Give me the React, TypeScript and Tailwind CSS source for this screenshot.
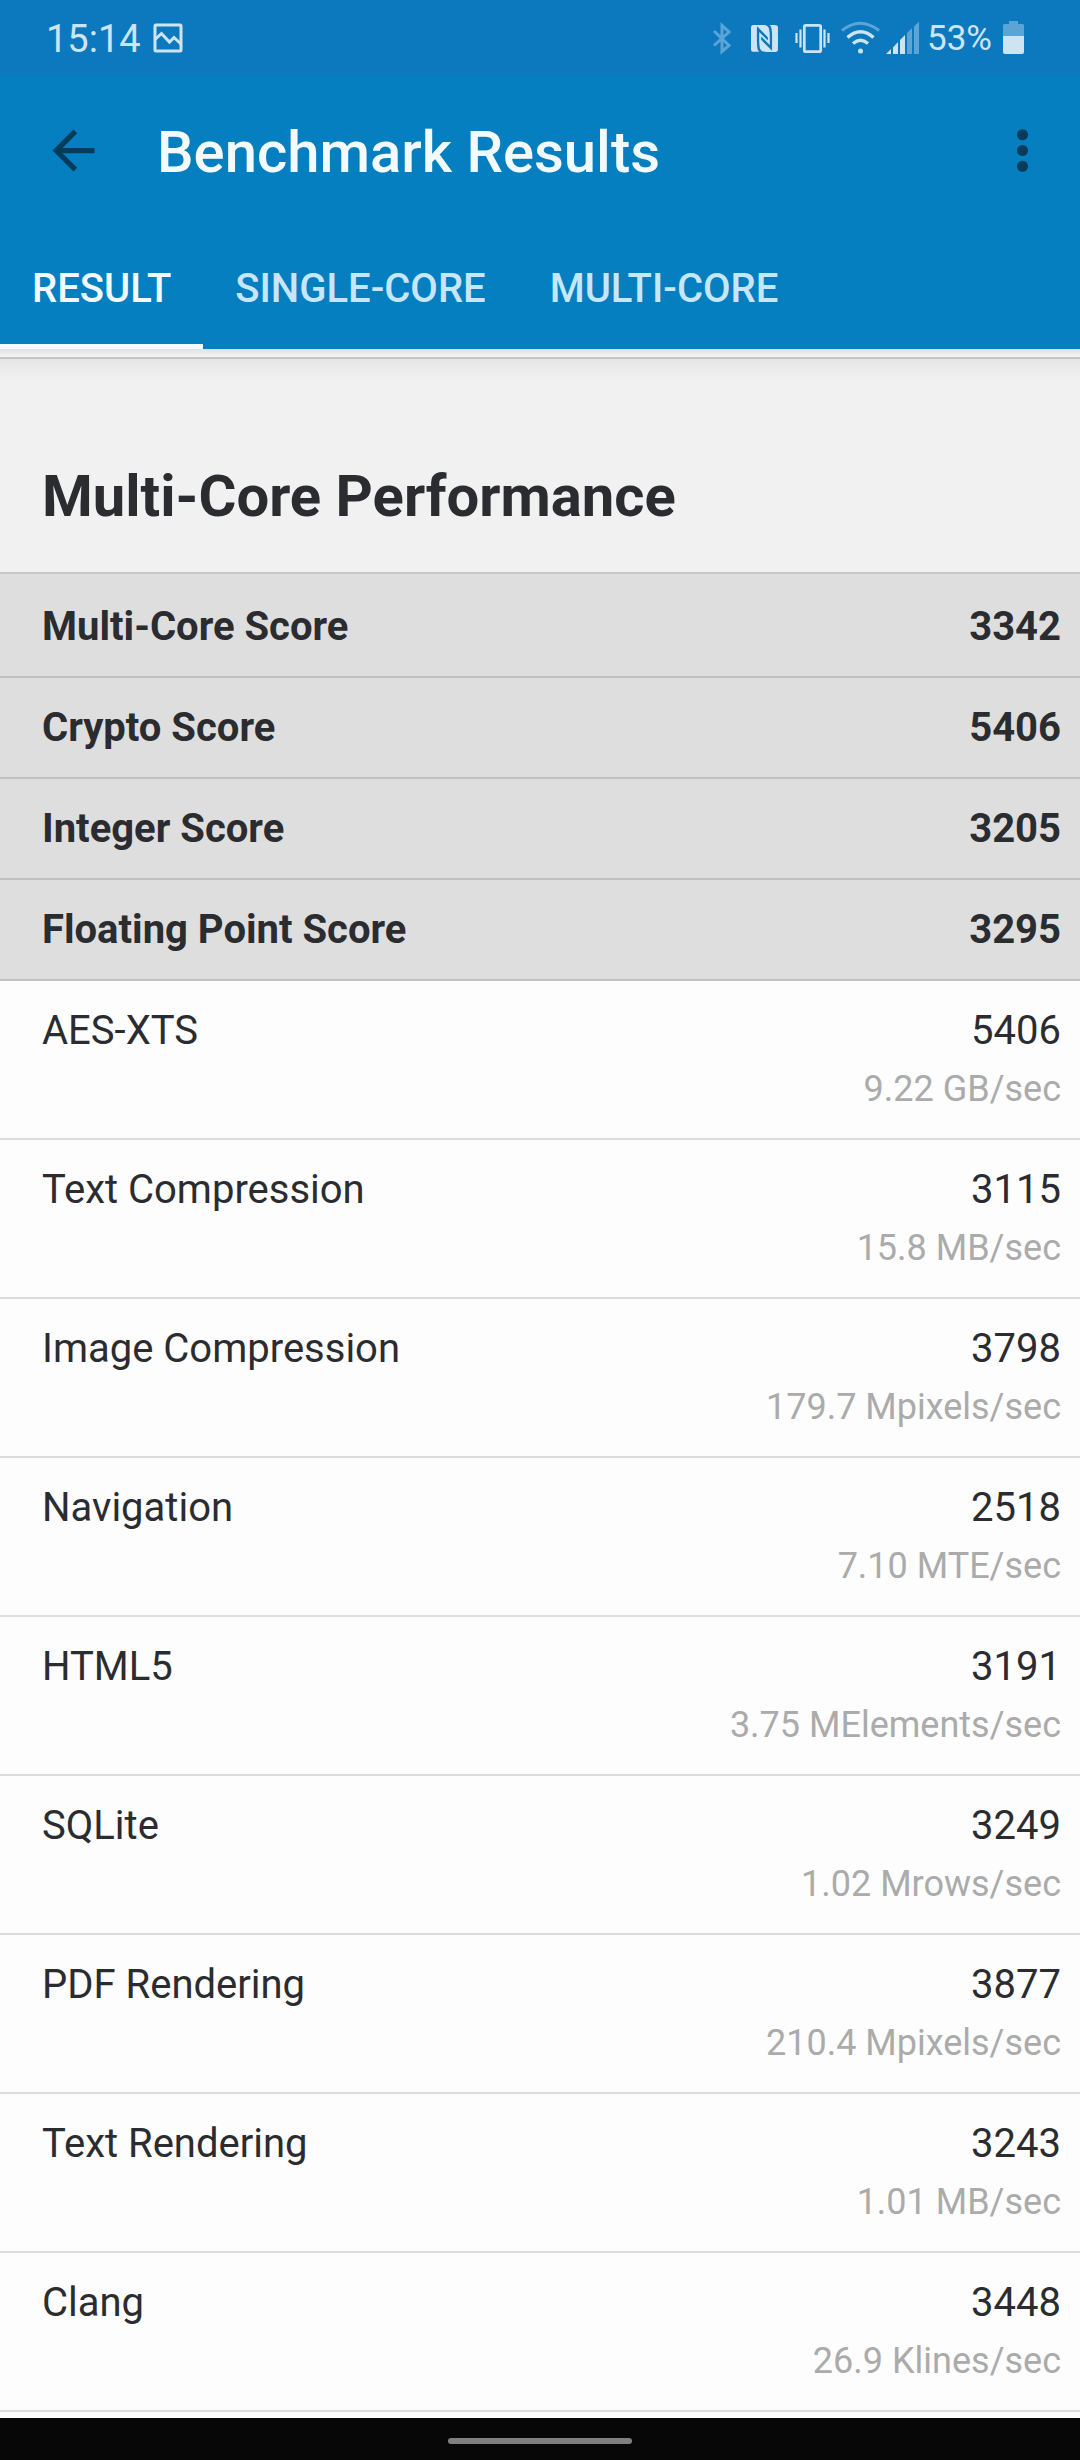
import React from "react";
import { SiNfc } from "react-icons/si";

const scores = [
  { name: "Multi-Core Score", value: "3342" },
  { name: "Crypto Score", value: "5406" },
  { name: "Integer Score", value: "3205" },
  { name: "Floating Point Score", value: "3295" },
];

const workloads = [
  { name: "AES-XTS", value: "5406", rate: "9.22 GB/sec" },
  { name: "Text Compression", value: "3115", rate: "15.8 MB/sec" },
  { name: "Image Compression", value: "3798", rate: "179.7 Mpixels/sec" },
  { name: "Navigation", value: "2518", rate: "7.10 MTE/sec" },
  { name: "HTML5", value: "3191", rate: "3.75 MElements/sec" },
  { name: "SQLite", value: "3249", rate: "1.02 Mrows/sec" },
  { name: "PDF Rendering", value: "3877", rate: "210.4 Mpixels/sec" },
  { name: "Text Rendering", value: "3243", rate: "1.01 MB/sec" },
  { name: "Clang", value: "3448", rate: "26.9 Klines/sec" },
];

const LIGHT = "#cfe4f3";
const DIM = "#5ba4d6";

function StatusBar() {
  return (
    <div className="flex h-[76px] items-center justify-between bg-[#0c79bf] pr-[54px] pl-[46px] text-[#cfe4f3]">
      <div className="flex items-center gap-3">
        <span className="pt-[2px] text-[38px] leading-[76px]">15:14</span>
        <svg width="30" height="30" viewBox="0 0 30 30" fill="none" stroke={LIGHT} strokeWidth="3" aria-hidden="true">
          <rect x="2" y="2" width="26" height="26" rx="1" />
          <path d="M2 16.500 L8.500 10.500 L16.500 19 L21 14.500 L28 21" />
        </svg>
      </div>
      <div className="flex items-center gap-[6px]">
        <svg width="30" height="34" viewBox="0 0 30 34" fill="none" stroke={DIM} strokeWidth="3" aria-hidden="true">
          <path d="M8 10 L23 24.500 L16 30.500 V4.500 L23 11 L8 24.500" />
        </svg>
        <span className="flex w-[44px] justify-center pt-px">
          <SiNfc size={27} aria-hidden="true" />
        </span>
        <svg width="42" height="34" viewBox="0 0 42 34" fill="none" stroke={LIGHT} aria-hidden="true">
          <rect x="12.300" y="4.300" width="16.400" height="26.400" rx="1.500" strokeWidth="2.700" />
          <path d="M4.500 12 V22 M36.500 12 V22 M8.500 8.500 V26.500 M32.500 8.500 V26.500" strokeWidth="2.200" />
        </svg>
        <svg width="40" height="34" viewBox="0 0 40 34" fill="none" aria-hidden="true">
          <path d="M2 9.500 Q20 -5 39 9.500" stroke={DIM} strokeWidth="3" />
          <path d="M7.500 16.500 Q20.500 5 33.500 16.500" stroke={LIGHT} strokeWidth="3.400" />
          <path d="M13 22.500 Q20.500 16 28 22.500" stroke={LIGHT} strokeWidth="3.400" />
          <circle cx="20.500" cy="30" r="2.500" fill={LIGHT} />
        </svg>
        <svg width="34" height="34" viewBox="0 0 34 34" fill={LIGHT} aria-hidden="true">
          <path d="M0 33 L5 28 V33Z M7 26.500 L12 21 V33 H7Z M14 19 L19 14 V33 H14Z" />
          <path d="M21 12 L26 7 V33 H21Z M28 5.500 L33 0.500 V33 H28Z" fill={DIM} />
        </svg>
        <span className="pt-[2px] pr-1 pl-px text-[35px] leading-[76px]">53%</span>
        <svg width="24" height="34" viewBox="0 0 24 34" aria-hidden="true">
          <path d="M1 16 V4.500 Q1 3 2.500 3 H7 V0 H16 V3 H20.500 Q22 3 22 4.500 V16Z" fill={DIM} />
          <path d="M1 15 H22 V31 Q22 33 20 33 H3 Q1 33 1 31Z" fill={LIGHT} />
        </svg>
      </div>
    </div>
  );
}

function AppBar() {
  return (
    <div className="flex h-[148px] items-center pr-[26px] pl-[42px]">
      <button type="button" aria-label="Back" className="text-[#043c5a]">
        <svg width="63" height="63" viewBox="0 0 24 24" fill="currentColor" aria-hidden="true">
          <path d="M20 11H7.830l5.590-5.590L12 4l-8 8 8 8 1.410-1.410L7.830 13H20v-2z" />
        </svg>
      </button>
      <h1 className="ml-[52px] flex-1 pt-[4px] text-[58px] leading-[68px] font-medium text-[#f3fafe]">Benchmark Results</h1>
      <button type="button" aria-label="More options" className="text-[#043c5a]">
        <svg width="63" height="63" viewBox="0 0 24 24" fill="currentColor" aria-hidden="true">
          <circle cx="12" cy="6" r="2.100" />
          <circle cx="12" cy="12" r="2.100" />
          <circle cx="12" cy="18" r="2.100" />
        </svg>
      </button>
    </div>
  );
}

function Tabs() {
  const tab = "h-[125px] border-b-[5px] px-8 pt-[10px] text-[40px] leading-[48px] font-medium";
  return (
    <div role="tablist" className="flex">
      <button type="button" role="tab" aria-selected="true" className={`${tab} border-[#f3fafe] text-[#f3fafe]`}>
        RESULT
      </button>
      <button type="button" role="tab" aria-selected="false" className={`${tab} border-transparent text-[#c5e6fb]`}>
        SINGLE-CORE
      </button>
      <button type="button" role="tab" aria-selected="false" className={`${tab} border-transparent text-[#c5e6fb]`}>
        MULTI-CORE
      </button>
    </div>
  );
}

function ScoreTable() {
  const scoreCell = "border-b-2 border-[#c1c1c1] pt-[21px] pb-5 font-bold";
  const workCell = "border-b-2 border-[#dcdcdc] pt-[21px] pb-5 align-top font-normal";
  return (
    <table className="w-full border-separate border-spacing-0 text-[40px] leading-[58px]">
      <tbody className="bg-[#dedede]">
        {scores.map((s) => (
          <tr key={s.name}>
            <th scope="row" className={`${scoreCell} pl-[42px] text-left`}>{s.name}</th>
            <td className={`${scoreCell} pr-[19px] text-right`}>{s.value}</td>
          </tr>
        ))}
      </tbody>
      <tbody className="bg-[#fdfdfd]">
        {workloads.map((w) => (
          <tr key={w.name}>
            <th scope="row" className={`${workCell} pl-[42px] text-left`}>{w.name}</th>
            <td className={`${workCell} pr-[19px] text-right`}>
              <div>{w.value}</div>
              <div className="text-[36px] text-[#ababab]">{w.rate}</div>
            </td>
          </tr>
        ))}
      </tbody>
    </table>
  );
}

export default function App() {
  return (
    <div className="flex min-h-screen flex-col bg-[#fdfdfd] font-['Roboto',sans-serif] text-[#2b2c30]">
      <header className="bg-[#057fc0]">
        <StatusBar />
        <AppBar />
        <Tabs />
      </header>
      <main className="flex-1">
        <div className="h-2 bg-linear-to-b from-[#e0e0e0] to-[#f6f6f6]" />
        <div className="border-y-2 border-t-[#c4c4c4] border-b-[#c8c8c8] bg-linear-to-b from-[#e6e6e6] to-[#f1f1f1] to-10% pt-[103px] pb-[42px] pl-[42px]">
          <h2 className="text-[58px] leading-[68px] font-bold">Multi-Core Performance</h2>
        </div>
        <div className="bg-[#dedede] pt-[3px]">
          <ScoreTable />
        </div>
      </main>
      <footer className="flex h-[42px] items-center justify-center bg-[#070707] pt-[4px]">
        <div className="h-[6px] w-[184px] rounded-full bg-[#7f7f7f]" />
      </footer>
    </div>
  );
}
